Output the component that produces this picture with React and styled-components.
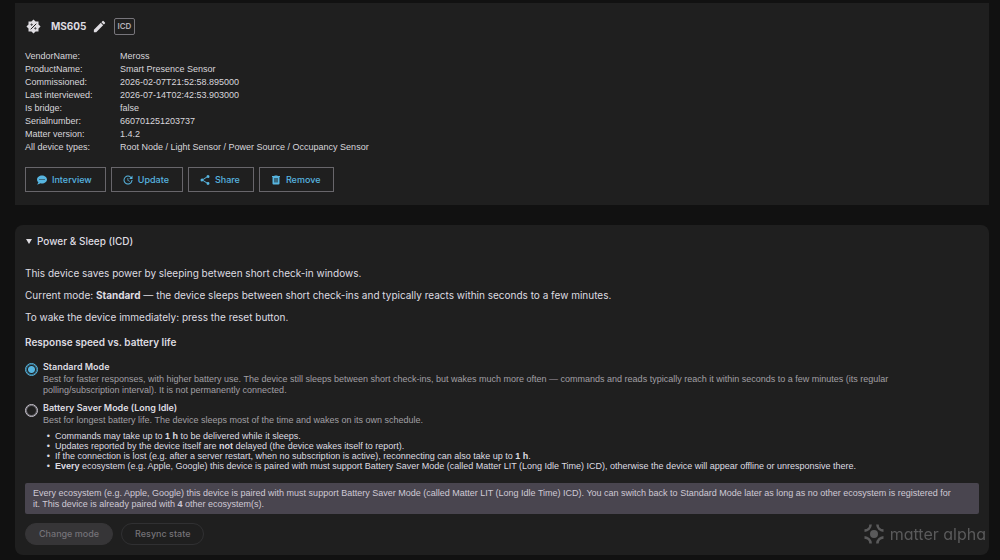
import styled, { createGlobalStyle } from "styled-components";
import { MdEdit } from "react-icons/md";

const GlobalStyle = createGlobalStyle`
  * {
    box-sizing: border-box;
  }

  body {
    margin: 0;
    background: #111111;
    color: #dedce1;
    font-family: Inter, "Liberation Sans", sans-serif;
    font-size: 10px;
    line-height: 12px;
  }
`;

const Page = styled.main`
  display: flex;
  flex-direction: column;
  gap: 20px;
  padding: 3px 11px 5px 15px;
`;

// node card
const NodeCard = styled.section`
  padding: 14px 10px 13px;
  background: #1f1f1f;
`;

const NodeHeader = styled.header`
  display: flex;
  align-items: center;
  height: 18px;
  padding-left: 1px;
`;

const NodeName = styled.h1`
  margin: 0 5px 0 10px;
  font-size: 10px;
  line-height: 14px;
  font-weight: 700;
`;

const IconButton = styled.button`
  display: flex;
  padding: 0;
  border: 0;
  background: none;
  color: inherit;
  cursor: pointer;
`;

const Badge = styled.span`
  margin-left: 7px;
  padding: 1px 3px;
  border: 1px solid #77757b;
  border-radius: 2px;
  color: #b3b1b7;
  font-size: 8px;
  line-height: 13px;
  font-weight: 600;
`;

const NodeInfo = styled.dl`
  display: grid;
  grid-template-columns: 95px 1fr;
  margin: 15px 0 13px;
  font-family: "Liberation Sans", sans-serif;
  font-size: 9px;
  line-height: 13px;
  color: #d8d6db;

  dd {
    margin: 0;
  }
`;

const Actions = styled.div`
  display: flex;
  flex-wrap: wrap;
  gap: 5px;
`;

const ActionButton = styled.button`
  display: flex;
  align-items: center;
  gap: 4px;
  height: 25px;
  padding: 0 13px 0 10px;
  border: 1px solid #68666b;
  background: none;
  color: #57b5e0;
  font: 500 9px/12px Inter, "Liberation Sans", sans-serif;
  cursor: pointer;
`;

// power & sleep card
const PowerCard = styled.details`
  padding: 10px;
  border-radius: 8px;
  background: #1f1f1f;
`;

const Summary = styled.summary`
  display: flex;
  align-items: center;
  gap: 5px;
  padding-left: 1px;
  list-style: none;
  font-weight: 500;
  cursor: pointer;

  &::before {
    content: "";
    border: 3px solid transparent;
    border-top: 5px solid currentColor;
    border-bottom: 0;
  }
`;

const Text = styled.p`
  margin: 0 0 10px;

  &:first-of-type {
    margin-top: 20px;
  }
`;

const SubTitle = styled.h2`
  margin: 13px 0 12px;
  font-size: 10px;
  line-height: 13px;
  font-weight: 600;
`;

const Option = styled.div`
  display: grid;
  grid-template-columns: 13px 1fr;
  column-gap: 5px;
  margin-bottom: 6px;
  font-family: "Liberation Sans", sans-serif;
  font-size: 9px;
  line-height: 11px;
`;

const Radio = styled.input`
  appearance: none;
  width: 13px;
  height: 13px;
  margin: 2px 0 0;
  border: 1px solid #c9c5d0;
  border-radius: 50%;
  box-shadow: inset 0 0 0 1px #6f6d73;

  &:checked {
    border-color: #57b5e0;
    background: radial-gradient(circle, #57b5e0 3px, transparent 4px);
    box-shadow: inset 0 0 0 1px #357089;
  }
`;

const OptionLabel = styled.label`
  display: block;
  margin-bottom: 2px;
  font-family: Inter, "Liberation Sans", sans-serif;
  font-weight: 600;
`;

const Hint = styled.div`
  padding-right: 30px;
  color: #a19fa4;
`;

const Consequences = styled.ul`
  margin: 5px 0 0;
  padding-left: 12px;
  list-style-type: "•\\00a0\\00a0";
  line-height: 10px;
`;

const Notice = styled.div`
  margin: 12px 0 9px;
  padding: 5px 24px 4px 8px;
  border-radius: 2px;
  background: #49454f;
  color: #cfc9d5;
  font-family: "Liberation Sans", sans-serif;
  font-size: 9px;
  line-height: 11px;
`;

const Footer = styled.div`
  display: flex;
  gap: 8px;
`;

const PillButton = styled.button`
  height: 22px;
  padding: 0 13px;
  border: 1px solid ${({ $filled }) => ($filled ? "#363537" : "#303032")};
  border-radius: 11px;
  background: ${({ $filled }) => ($filled ? "#363537" : "transparent")};
  color: #747277;
  font: 500 9px/12px Inter, "Liberation Sans", sans-serif;
`;

const Watermark = styled.div`
  position: fixed;
  right: 14px;
  bottom: 15px;
  display: flex;
  align-items: center;
  gap: 6px;
  color: #5a5a5b;
  font-size: 16px;
  line-height: 22px;
  font-feature-settings: "cv11";
`;

const MdiIcon = ({ path, size = 12 }) => (
  <svg width={size} height={size} viewBox="0 0 24 24" aria-hidden="true">
    <path d={path} fill="currentColor" fillRule="evenodd" />
  </svg>
);

const CHAT =
  "M12 3C17.5 3 22 6.58 22 11C22 15.42 17.5 19 12 19C10.76 19 9.57 18.82 8.47 18.5C5.55 21 2 21 2 21C4.33 18.67 4.7 17.1 4.75 16.5C3.05 15.07 2 13.13 2 11C2 6.58 6.5 3 12 3M17 12V10H15V12H17M13 12V10H11V12H13M9 12V10H7V12H9Z";
const UPDATE =
  "M21,10.12H14.22L16.96,7.3C14.23,4.6 9.81,4.5 7.08,7.2C4.35,9.91 4.35,14.28 7.08,17C9.81,19.7 14.23,19.7 16.96,17C18.32,15.65 19,14.08 19,12.1H21C21,14.08 20.12,16.65 18.36,18.39C14.85,21.87 9.15,21.87 5.64,18.39C2.14,14.92 2.11,9.28 5.62,5.81C9.13,2.34 14.76,2.34 18.27,5.81L21,3V10.12M12.5,8V12.25L16,14.33L15.28,15.54L11,13V8H12.5Z";
const SHARE =
  "M18,16.08C17.24,16.08 16.56,16.38 16.04,16.85L8.91,12.7C8.96,12.47 9,12.24 9,12C9,11.76 8.96,11.53 8.91,11.3L15.96,7.19C16.5,7.69 17.21,8 18,8A3,3 0 0,0 21,5A3,3 0 0,0 18,2A3,3 0 0,0 15,5C15,5.24 15.04,5.47 15.09,5.7L8.04,9.81C7.5,9.31 6.79,9 6,9A3,3 0 0,0 3,12A3,3 0 0,0 6,15C6.79,15 7.5,14.69 8.04,14.19L15.16,18.34C15.11,18.55 15.08,18.77 15.08,19C15.08,20.61 16.39,21.91 18,21.91C19.61,21.91 20.92,20.61 20.92,19A2.92,2.92 0 0,0 18,16.08Z";
const TRASH =
  "M9,3V4H4V6H5V19A2,2 0 0,0 7,21H17A2,2 0 0,0 19,19V6H20V4H15V3H9M9,8H11V17H9V8M13,8H15V17H13V8Z";

const BrightnessIcon = () => (
  <svg width="15" height="15" viewBox="0 0 24 24" aria-hidden="true">
    <path
      d="M20 8.7V4h-4.7L12 .7 8.7 4H4v4.7L.7 12 4 15.3V20h4.7l3.3 3.3 3.3-3.3H20v-4.7l3.3-3.3L20 8.7Z"
      fill="currentColor"
    />
    <g stroke="#1f1f1f" strokeWidth="1.6" fill="none">
      <path d="M7.5 16.5l9-9" />
      <circle cx="9" cy="9" r="1" />
      <circle cx="15" cy="15" r="1" />
    </g>
  </svg>
);

const MatterAlphaLogo = () => (
  <svg width="20" height="20" viewBox="0 0 20 20" aria-hidden="true">
    <circle cx="10" cy="10" r="4" fill="currentColor" />
    <g fill="none" stroke="currentColor" strokeWidth="2.6">
      <path d="M6.6 0.5A6.4 6.4 0 0 1 0.5 6.6" />
      <path d="M13.4 0.5A6.4 6.4 0 0 0 19.5 6.6" />
      <path d="M6.6 19.5A6.4 6.4 0 0 0 0.5 13.4" />
      <path d="M13.4 19.5A6.4 6.4 0 0 1 19.5 13.4" />
    </g>
  </svg>
);

const info = [
  ["VendorName:", "Meross"],
  ["ProductName:", "Smart Presence Sensor"],
  ["Commissioned:", "2026-02-07T21:52:58.895000"],
  ["Last interviewed:", "2026-07-14T02:42:53.903000"],
  ["Is bridge:", "false"],
  ["Serialnumber:", "660701251203737"],
  ["Matter version:", "1.4.2"],
  [
    "All device types:",
    "Root Node / Light Sensor / Power Source / Occupancy Sensor",
  ],
];

const actions = [
  { label: "Interview", path: CHAT },
  { label: "Update", path: UPDATE },
  { label: "Share", path: SHARE },
  { label: "Remove", path: TRASH },
];

export default function App() {
  return (
    <>
      <GlobalStyle />
      <Page>
        <NodeCard>
          <NodeHeader>
            <BrightnessIcon />
            <NodeName>MS605</NodeName>
            <IconButton aria-label="Edit name">
              <MdEdit size={15} />
            </IconButton>
            <Badge>ICD</Badge>
          </NodeHeader>
          <NodeInfo>
            {info.flatMap(([name, value]) => [
              <dt key={name}>{name}</dt>,
              <dd key={name + "value"}>{value}</dd>,
            ])}
          </NodeInfo>
          <Actions>
            {actions.map(({ label, path }) => (
              <ActionButton key={label}>
                <MdiIcon path={path} />
                {label}
              </ActionButton>
            ))}
          </Actions>
        </NodeCard>

        <PowerCard open>
          <Summary>Power &amp; Sleep (ICD)</Summary>
          <Text>
            This device saves power by sleeping between short check-in windows.
          </Text>
          <Text>
            Current mode: <b>Standard</b> — the device sleeps between short
            check-ins and typically reacts within seconds to a few minutes.
          </Text>
          <Text>To wake the device immediately: press the reset button.</Text>
          <SubTitle>Response speed vs. battery life</SubTitle>

          <Option>
            <Radio type="radio" name="mode" id="mode-standard" defaultChecked />
            <div>
              <OptionLabel htmlFor="mode-standard">Standard Mode</OptionLabel>
              <Hint>
                Best for faster responses, with higher battery use. The device
                still sleeps between short check-ins, but wakes much more often
                — commands and reads typically reach it within seconds to a few
                minutes (its regular polling/subscription interval). It is not
                permanently connected.
              </Hint>
            </div>
          </Option>
          <Option>
            <Radio type="radio" name="mode" id="mode-saver" />
            <div>
              <OptionLabel htmlFor="mode-saver">
                Battery Saver Mode (Long Idle)
              </OptionLabel>
              <Hint>
                Best for longest battery life. The device sleeps most of the
                time and wakes on its own schedule.
              </Hint>
              <Consequences>
                <li>
                  Commands may take up to <b>1 h</b> to be delivered while it
                  sleeps.
                </li>
                <li>
                  Updates reported by the device itself are <b>not</b> delayed
                  (the device wakes itself to report).
                </li>
                <li>
                  If the connection is lost (e.g. after a server restart, when
                  no subscription is active), reconnecting can also take up to{" "}
                  <b>1 h</b>.
                </li>
                <li>
                  <b>Every</b> ecosystem (e.g. Apple, Google) this device is
                  paired with must support Battery Saver Mode (called Matter LIT
                  (Long Idle Time) ICD), otherwise the device will appear
                  offline or unresponsive there.
                </li>
              </Consequences>
            </div>
          </Option>

          <Notice>
            Every ecosystem (e.g. Apple, Google) this device is paired with must
            support Battery Saver Mode (called Matter LIT (Long Idle Time) ICD).
            You can switch back to Standard Mode later as long as no other
            ecosystem is registered for it. This device is already paired with{" "}
            <b>4</b> other ecosystem(s).
          </Notice>

          <Footer>
            <PillButton $filled disabled>
              Change mode
            </PillButton>
            <PillButton disabled>Resync state</PillButton>
          </Footer>
        </PowerCard>
      </Page>
      <Watermark>
        <MatterAlphaLogo />
        matter alpha
      </Watermark>
    </>
  );
}
